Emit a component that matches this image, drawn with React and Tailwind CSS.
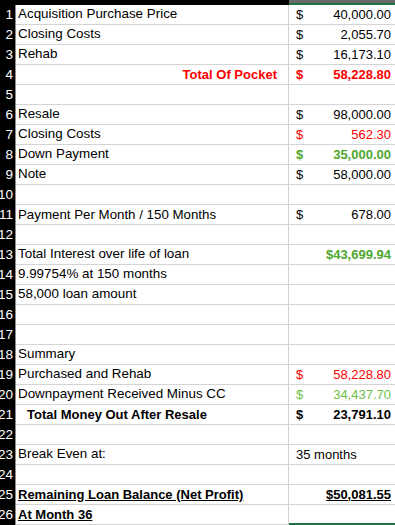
import React from "react";

const RED = "text-[#ff0000]";
const GREEN = "text-[#4ea72e]";
const GREEN_LIGHT = "text-[#6fbf4a]";

const rows = [
  { a: "Acquisition Purchase Price", cur: "$", val: "40,000.00" },
  { a: "Closing Costs", cur: "$", val: "2,055.70" },
  { a: "Rehab", cur: "$", val: "16,173.10" },
  { total: "Total Of Pocket", cur: "$", val: "58,228.80", tone: `${RED} font-bold` },
  {},
  { a: "Resale", cur: "$", val: "98,000.00" },
  { a: "Closing Costs", cur: "$", val: "562.30", tone: RED },
  { a: "Down Payment", cur: "$", val: "35,000.00", tone: `${GREEN} font-bold` },
  { a: "Note", cur: "$", val: "58,000.00" },
  {},
  { a: "Payment Per Month / 150 Months", arial: true, cur: "$", val: "678.00" },
  {},
  { a: "Total Interest over life of loan", right: "$43,699.94", tone: `${GREEN} font-bold` },
  { a: "9.99754% at 150 months" },
  { a: "58,000 loan amount" },
  {},
  {},
  { a: "Summary" },
  { a: "Purchased and Rehab", cur: "$", val: "58,228.80", tone: RED },
  { a: "Downpayment Received Minus CC", cur: "$", val: "34,437.70", tone: GREEN_LIGHT },
  { a: "Total Money Out After Resale", indent: true, bold: true, cur: "$", val: "23,791.10", tone: "font-bold" },
  {},
  { a: "Break Even at:", left: "35 months" },
  {},
  { a: "Remaining Loan Balance (Net Profit)", bold: true, under: true, right: "$50,081.55", tone: "font-bold underline" },
  { a: "At Month 36", bold: true, under: true, active: true },
];

const Row = ({ r, n }) => {
  const size = r.arial ? "text-[13.3px]" : r.bold ? "text-[13px]" : "text-[13.4px]";
  const aClass = [
    "flex items-center h-[19px] whitespace-nowrap overflow-hidden border-r border-[#d4d4d4] font-['Liberation_Sans']",
    size,
    r.indent ? "pl-[11px]" : "pl-[2px]",
    r.bold ? "font-bold" : "",
    r.under ? "underline" : "",
  ].join(" ");

  return (
    <div className="grid grid-cols-[16px_273px_1fr] h-[20px]">
      <div className="bg-black text-white text-[13.5px] font-['Liberation_Sans'] flex items-center justify-end pr-[2px] h-[20px] border-r border-[#8a8a8a] overflow-hidden leading-none">
        {n}
      </div>
      <div className="border-b border-[#d4d4d4] h-[20px]">
        {r.total ? (
          <div className="flex items-center justify-end h-[19px] pr-[11px] border-r border-[#d4d4d4] font-['Liberation_Sans'] text-[13px] font-bold text-[#ff0000]">
            {r.total}
          </div>
        ) : (
          <div className={aClass}>{r.a}</div>
        )}
      </div>
      <div
        className={`h-[20px] font-['Liberation_Sans'] text-[13px] ${
          r.active ? "border-b-2 border-[#217346]" : "border-b border-[#d4d4d4]"
        }`}
      >
        <div className={`flex items-center h-[19px] pl-[7px] pr-[4px] ${r.tone || ""}`}>
          {r.cur && (
            <>
              <span>{r.cur}</span>
              <span className="ml-auto">{r.val}</span>
            </>
          )}
          {r.right && <span className="ml-auto">{r.right}</span>}
          {r.left && <span>{r.left}</span>}
        </div>
      </div>
    </div>
  );
};

export default function App() {
  return (
    <div className="w-[395px] h-[525px] overflow-hidden bg-white text-black">
      <div className="grid grid-cols-[16px_273px_1fr] h-[5px]">
        <div className="bg-black" />
        <div className="bg-black" />
        <div className="bg-[#6a6a6a] border-b-2 border-[#217346]" />
      </div>
      {rows.map((r, i) => (
        <Row key={i} r={r} n={i + 1} />
      ))}
    </div>
  );
}
